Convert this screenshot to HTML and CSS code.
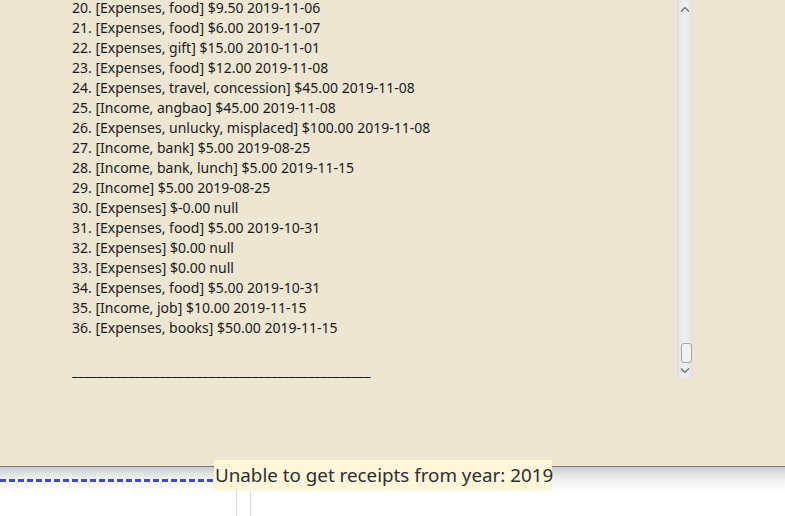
FILE: index.html
```html
<!DOCTYPE html>
<html>
<head>
<meta charset="utf-8">
<link rel="stylesheet" href="styles.css">
</head>
<body>
<div class="panel">
  <div class="list">
    <div class="line">20. [Expenses, food] $9.50 2019-11-06</div>
    <div class="line">21. [Expenses, food] $6.00 2019-11-07</div>
    <div class="line">22. [Expenses, gift] $15.00 2010-11-01</div>
    <div class="line">23. [Expenses, food] $12.00 2019-11-08</div>
    <div class="line">24. [Expenses, travel, concession] $45.00 2019-11-08</div>
    <div class="line">25. [Income, angbao] $45.00 2019-11-08</div>
    <div class="line">26. [Expenses, unlucky, misplaced] $100.00 2019-11-08</div>
    <div class="line">27. [Income, bank] $5.00 2019-08-25</div>
    <div class="line">28. [Income, bank, lunch] $5.00 2019-11-15</div>
    <div class="line">29. [Income] $5.00 2019-08-25</div>
    <div class="line">30. [Expenses] $-0.00 null</div>
    <div class="line">31. [Expenses, food] $5.00 2019-10-31</div>
    <div class="line">32. [Expenses] $0.00 null</div>
    <div class="line">33. [Expenses] $0.00 null</div>
    <div class="line">34. [Expenses, food] $5.00 2019-10-31</div>
    <div class="line">35. [Income, job] $10.00 2019-11-15</div>
    <div class="line">36. [Expenses, books] $50.00 2019-11-15</div>
    <div class="line"></div>
    <div class="line">________________________________________________</div>
  </div>
  <div class="scrollbar">
    <svg class="arrow up" width="10" height="6" viewBox="0 0 10 6"><path d="M1 5.5 L5 1.5 L9 5.5" fill="none" stroke="#6a6a6a" stroke-width="1.2"/></svg>
    <div class="track"></div>
    <div class="thumb"></div>
    <svg class="arrow down" width="10" height="6" viewBox="0 0 10 6"><path d="M1 0.5 L5 4.5 L9 0.5" fill="none" stroke="#6a6a6a" stroke-width="1.2"/></svg>
  </div>
</div>
<div class="bottom">
  <div class="dashes"></div>
  <div class="cols">
    <div class="col-line"></div>
    <div class="col-line second"></div>
  </div>
  <div class="tooltip">Unable to get receipts from year: 2019</div>
</div>
</body>
</html>
```
FILE: styles.css
```css
html, body {
  margin: 0;
  padding: 0;
  width: 785px;
  height: 516px;
  overflow: hidden;
  background: #ffffff;
  font-family: "Noto Sans", "Open Sans", sans-serif;
}
.panel {
  background: #ece6d2;
  display: flex;
  align-items: flex-start;
  border-bottom: 1px solid #7a7a7a;
  box-sizing: border-box;
  height: 467px;
}
.list {
  width: 605px;
  padding-left: 72px;
  margin-top: -2px;
  color: #1a1a1a;
  font-size: 14px;
}
.line {
  height: 20px;
  line-height: 20px;
  white-space: nowrap;
}
.line:nth-last-child(2) {
  height: 23px;
}
.scrollbar {
  width: 16px;
  height: 378px;
  background: linear-gradient(to right, #dcdcdc 0, #ececec 30%, #eeeeee 60%, #e0e0e0 100%);
  display: flex;
  flex-direction: column;
  align-items: center;
}
.arrow.up {
  margin-top: 6px;
}
.track {
  flex: 1;
}
.thumb {
  width: 9px;
  height: 18px;
  border: 1px solid #a8a8a8;
  border-radius: 3px;
  background: #f2f2f2;
  margin-left: 2px;
}
.arrow.down {
  margin-top: 5px;
  margin-bottom: 4px;
}
.bottom {
  position: relative;
  height: 49px;
  background: linear-gradient(to bottom, #c9c9c9 0, #e6e6e6 8px, #f7f7f7 16px, #ffffff 26px);
}
.dashes {
  position: absolute;
  left: 0;
  top: 12px;
  width: 214px;
  height: 3px;
  background: repeating-linear-gradient(to right, #3b4cc0 0, #3b4cc0 6px, transparent 6px, transparent 9px);
}
.cols {
  position: absolute;
  left: 236px;
  top: 24px;
  height: 25px;
  display: flex;
  gap: 13px;
}
.col-line {
  width: 1px;
  height: 25px;
  background: #dcdcdc;
}
.tooltip {
  position: absolute;
  left: 214px;
  top: -7px;
  width: 338px;
  height: 31px;
  box-sizing: border-box;
  background: #fff6dc;
  color: #2e2e2e;
  font-size: 18.8px;
  line-height: 31px;
  white-space: nowrap;
  padding-left: 1px;
}
```
